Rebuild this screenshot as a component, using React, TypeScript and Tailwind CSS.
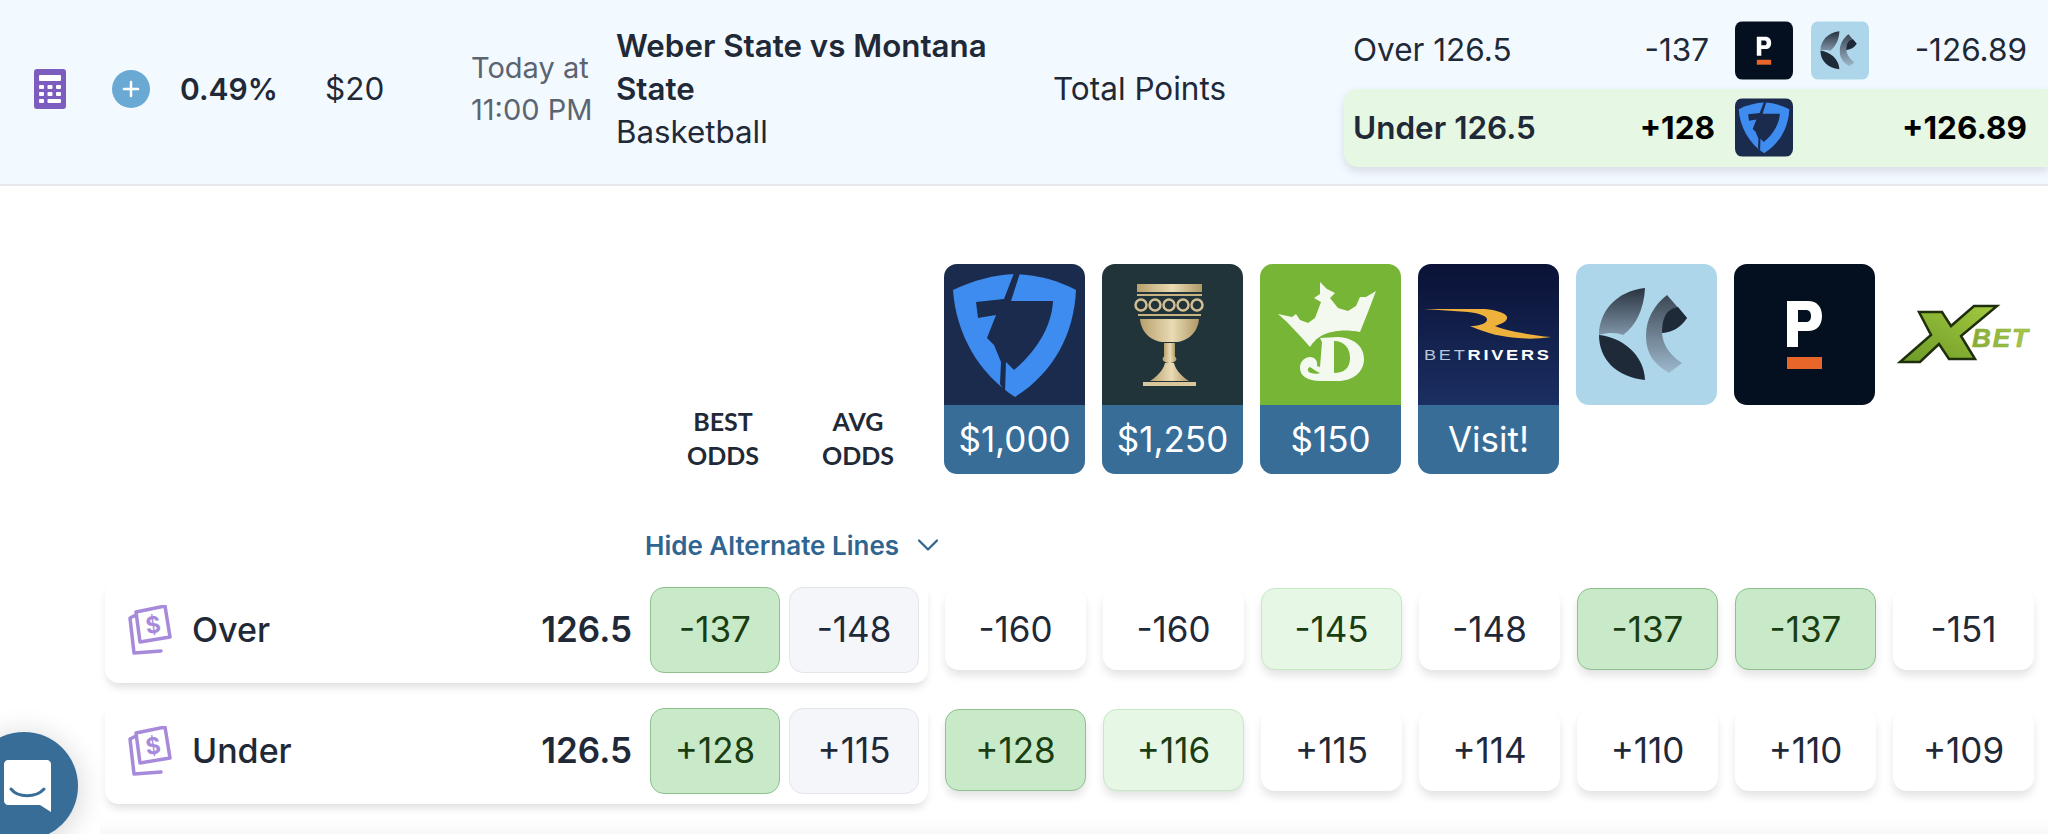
import { ChevronDown, Plus } from "lucide-react";

const FanDuelLogo = () => (
  <svg viewBox="0 0 141 141" className="w-full h-full block">
    <rect width="141" height="141" fill="#1a2b4d" />
    <path d="M9 26C30 16 50 11 71 10C95 11 115 17 132 26C130 70 110 108 71 133C35 110 12 70 9 26Z" fill="#3f8cf0" />
    <path d="M70 9L76 9L67 37L109 37C108 60 95 85 70 106L62 98L61 128L56 120L57 98L50 81L43 74L52 51L34 54L32 38L60 35Z" fill="#1a2b4d" />
  </svg>
);

const ChaliceLogo = () => (
  <svg viewBox="0 0 141 141" className="w-full h-full block">
    <defs>
      <linearGradient id="gold" x1="0" x2="1" y1="0" y2="0">
        <stop offset="0" stopColor="#b8a06c" />
        <stop offset="0.55" stopColor="#eadbb4" />
        <stop offset="1" stopColor="#b09866" />
      </linearGradient>
    </defs>
    <rect width="141" height="141" fill="#20343a" />
    <rect x="35" y="20" width="65" height="8" fill="url(#gold)" />
    <rect x="35" y="30" width="65" height="2" fill="#c9b383" />
    {[39, 53, 67, 81, 95].map((cx) => (
      <circle key={cx} cx={cx} cy="41" r="5.5" fill="none" stroke="#d3bf92" strokeWidth="2.5" />
    ))}
    <rect x="36" y="50" width="63" height="2" fill="#c9b383" />
    <path d="M38 55L97 55C96 68 86 77 75 78L60 78C49 77 39 68 38 55Z" fill="url(#gold)" />
    <rect x="62" y="79" width="11" height="14" fill="url(#gold)" />
    <ellipse cx="67.5" cy="95" rx="7" ry="4" fill="url(#gold)" />
    <path d="M63 99L72 99C74 107 81 113 87 117L48 117C54 113 61 107 63 99Z" fill="url(#gold)" />
    <rect x="41" y="118" width="53" height="4" fill="#d9c69a" />
  </svg>
);

const DraftKingsLogo = () => (
  <svg viewBox="0 0 141 141" className="w-full h-full block">
    <rect width="141" height="141" fill="#76b536" />
    <path d="M18 50L32 53L36 50L40 56L48 59L55 54L61 38L54 34L60 30L60 18L67 25L75 29L70 34L78 44L88 47L96 42L100 33L106 33L116 27L108 48L100 68C90 66 80 66 72 68C62 70 56 74 50 83C40 72 30 60 18 50Z" fill="#f4f9ef" />
    <path d="M60 74L78 73C95 74 104 83 104 95C104 108 93 117 78 117L60 117C48 117 40 112 40 104C40 97 45 93 50 93C55 93 58 97 57 102L60 103L62 78Z" fill="#f4f9ef" />
    <path d="M74 77C84 77 90 84 90 94C90 104 84 109 74 109Z" fill="#76b536" />
    <path d="M50 103C47 104 47 108 51 109C54 110 58 110 60 109L56 107Z" fill="#76b536" />
  </svg>
);

const BetRiversLogo = () => (
  <svg viewBox="0 0 141 141" className="w-full h-full block">
    <defs>
      <linearGradient id="rivers" x1="0" x2="0" y1="0" y2="1">
        <stop offset="0" stopColor="#0a1236" />
        <stop offset="1" stopColor="#1b2f62" />
      </linearGradient>
    </defs>
    <rect width="141" height="141" fill="url(#rivers)" />
    <path d="M6 45L67 45C78 46 88 49 89 53C90 57 84 60 77 62C86 66 110 71 133 73C120 75 108 75 100 74C85 73 70 70 52 62C60 62 68 60 69 56C70 52 60 49 50 48Z" fill="#eeb13c" />
    <text transform="translate(6 96) scale(1.3 1)" fontFamily="'Liberation Sans', sans-serif" fontSize="14" letterSpacing="2.1" fill="#b9c4d6">
      BET<tspan fontWeight="700" fill="#ffffff">RIVERS</tspan>
    </text>
  </svg>
);

const KalshiLogo = () => (
  <svg viewBox="0 0 141 141" className="w-full h-full block">
    <defs>
      <linearGradient id="leaf" x1="0" x2="0" y1="0" y2="1">
        <stop offset="0" stopColor="#2a3340" />
        <stop offset="1" stopColor="#7f95a8" />
      </linearGradient>
      <linearGradient id="arc" x1="0" x2="0" y1="0" y2="1">
        <stop offset="0" stopColor="#3d4855" />
        <stop offset="1" stopColor="#9db8cc" />
      </linearGradient>
    </defs>
    <rect width="141" height="141" fill="#aed6ea" />
    <path d="M69 24C40 27 23 48 23 71C33 68 42 69 47 71C60 62 68 45 69 24Z" fill="url(#leaf)" />
    <path d="M23 71C45 73 68 90 69 116C40 113 23 95 23 71Z" fill="#1f2a38" />
    <path d="M91 31L111 54C104 64 96 68 86 69C87 82 95 92 106 99L93 109C78 100 70 90 70 72C70 55 78 41 91 31Z" fill="url(#arc)" />
    <path d="M111 54L102 43C92 45 86 51 86 69C96 68 104 64 111 54Z" fill="#1f2a38" />
  </svg>
);

const PrizeLogo = () => (
  <svg viewBox="0 0 141 141" className="w-full h-full block">
    <rect width="141" height="141" fill="#04101f" />
    <path fillRule="evenodd" d="M53 37L74 37C83 37 88 43 88 52C88 61 83 67 74 67L64 67L64 83L53 83ZM64 46L64 58L72 58C75 58 77 56 77 52C77 48 75 46 72 46Z" fill="#ffffff" />
    <rect x="53" y="93" width="35" height="12" fill="#e8662a" />
  </svg>
);

const XBetLogo = () => (
  <svg viewBox="0 0 141 141" className="w-full h-full block">
    <defs>
      <linearGradient id="xgreen" x1="1" x2="0" y1="0" y2="1">
        <stop offset="0" stopColor="#a3c93f" />
        <stop offset="1" stopColor="#6c9a28" />
      </linearGradient>
      <linearGradient id="bgreen" x1="0" x2="1" y1="0" y2="0">
        <stop offset="0" stopColor="#86aa38" />
        <stop offset="1" stopColor="#a9cc49" />
      </linearGradient>
    </defs>
    <text x="80" y="83" fontFamily="'Liberation Sans', sans-serif" fontSize="26" fontWeight="700" fontStyle="italic" letterSpacing="2" fill="url(#bgreen)" stroke="#8fb23e" strokeWidth="0.7">BET</text>
    <path d="M27 48L50 48L59 62L82 42L105 42L69 72L83 95L57 95L47 80L28 98L8 98L39 71Z" fill="url(#xgreen)" stroke="#1f2f0c" strokeWidth="2.5" />
  </svg>
);

const MoneyIcon = () => (
  <svg viewBox="0 0 44 50" className="w-[44px] h-[50px] shrink-0">
    <path d="M8 10L2 13L6 48L33 46" fill="none" stroke="#a78bda" strokeWidth="3.5" strokeLinejoin="round" strokeLinecap="round" />
    <polygon points="8,7 37,1 42,32 12,37" fill="#fff" stroke="#a78bda" strokeWidth="3.5" strokeLinejoin="round" />
    <text x="25" y="28" textAnchor="middle" transform="rotate(-8 25 20)" fontFamily="Inter, sans-serif" fontWeight="700" fontSize="23" fill="#a78bda">$</text>
  </svg>
);

const CalcIcon = () => (
  <svg viewBox="0 0 32 40" className="w-[32px] h-[40px] shrink-0">
    <rect width="32" height="40" rx="3" fill="#7c5cbf" />
    <rect x="5" y="6" width="22" height="6" rx="1" fill="#fff" />
    {[16, 23].map((y) =>
      [5, 13.5, 22].map((x) => <rect key={`${x}-${y}`} x={x} y={y} width="5" height="4" rx="1" fill="#fff" />),
    )}
    <rect x="5" y="30" width="5" height="4" rx="1" fill="#fff" />
    <rect x="13.5" y="30" width="13.5" height="4" rx="1" fill="#fff" />
  </svg>
);

const ChatIcon = () => (
  <svg viewBox="0 0 47 52" className="w-[47px] h-[52px]">
    <path d="M4 0L43 0C45 0 47 2 47 4L47 52L36 45L4 45C2 45 0 43 0 41L0 4C0 2 2 0 4 0Z" fill="#fff" />
    <path d="M7 29C14 38 32 38 40 29" fill="none" stroke="#386d98" strokeWidth="3" strokeLinecap="round" />
  </svg>
);

const books = [
  { logo: <FanDuelLogo />, label: "$1,000" },
  { logo: <ChaliceLogo />, label: "$1,250" },
  { logo: <DraftKingsLogo />, label: "$150" },
  { logo: <BetRiversLogo />, label: "Visit!" },
  { logo: <KalshiLogo /> },
  { logo: <PrizeLogo /> },
  { logo: <XBetLogo /> },
];

type Odd = { v: string; tone?: "strong" | "light" };

const rows: { name: string; best: string; avg: string; odds: Odd[] }[] = [
  {
    name: "Over",
    best: "-137",
    avg: "-148",
    odds: [
      { v: "-160" },
      { v: "-160" },
      { v: "-145", tone: "light" },
      { v: "-148" },
      { v: "-137", tone: "strong" },
      { v: "-137", tone: "strong" },
      { v: "-151" },
    ],
  },
  {
    name: "Under",
    best: "+128",
    avg: "+115",
    odds: [
      { v: "+128", tone: "strong" },
      { v: "+116", tone: "light" },
      { v: "+115" },
      { v: "+114" },
      { v: "+110" },
      { v: "+110" },
      { v: "+109" },
    ],
  },
];

const oddClass = (tone?: string) => {
  if (tone === "strong") return "bg-[#c9eac9] border border-[#8fc08f] text-[#1a3d12]";
  if (tone === "light") return "bg-[#e6f7e6] border border-[#c5e8c5] text-[#1a3d12]";
  return "bg-white text-[#1f2937]";
};

export default function App() {
  return (
    <div className="relative h-[834px] overflow-hidden bg-white text-[#1f2937] font-['Inter',sans-serif]">
      {/* top bet row */}
      <div className="flex items-center h-[186px] pb-[6px] bg-[#f3faff] border-b-2 border-[#e5e7eb]">
        <div className="flex items-center w-[616px] pl-[34px]">
          <CalcIcon />
          <div className="ml-[46px] w-[38px] h-[38px] rounded-full bg-[#6aa9d4] flex items-center justify-center text-white shrink-0">
            <Plus size={24} strokeWidth={2.5} />
          </div>
          <div className="ml-[30px] w-[145px] text-[30px] font-semibold">0.49%</div>
          <div className="w-[146px] text-[31.5px]">$20</div>
          <div className="text-[29px] leading-[42px] text-[#5b6470] whitespace-nowrap">
            Today at
            <br />
            11:00 PM
          </div>
        </div>
        <div className="w-[437px] pr-[50px] text-[31.3px] leading-[43px]">
          <div className="font-semibold">Weber State vs Montana State</div>
          <div>Basketball</div>
        </div>
        <div className="w-[291px] text-[31.5px]">Total Points</div>
        <div className="flex-1 flex flex-col">
          <div className="flex items-center h-[59px] pl-[9px] pr-[21px] my-[9px] text-[31.5px]">
            <div className="w-[282px]">Over 126.5</div>
            <div className="w-[74px] text-right">-137</div>
            <div className="ml-[26px] w-[58px] h-[59px] rounded-[8px] overflow-hidden">
              <PrizeLogo />
            </div>
            <div className="ml-[18px] w-[58px] h-[59px] rounded-[8px] overflow-hidden">
              <KalshiLogo />
            </div>
            <div className="flex-1 text-right">-126.89</div>
          </div>
          <div className="flex items-center h-[78px] pl-[9px] pr-[21px] rounded-l-[14px] bg-[#e6f7e3] shadow-[0_4px_10px_rgba(0,0,0,0.12)] text-[31.5px] font-bold">
            <div className="w-[282px] font-semibold">Under 126.5</div>
            <div className="w-[80px] text-right text-black">+128</div>
            <div className="ml-[20px] w-[58px] h-[59px] rounded-[8px] overflow-hidden">
              <FanDuelLogo />
            </div>
            <div className="flex-1 text-right text-black">+126.89</div>
          </div>
        </div>
      </div>

      <div className="pt-[78px]">
        {/* sportsbook logos */}
        <div className="flex items-end">
          <div className="w-[944px] pl-[658px] flex gap-[5px] pb-[2px] shrink-0">
            <div className="w-[130px] text-center text-[25px] leading-[34px] font-bold font-['Lato',sans-serif]">
              BEST
              <br />
              ODDS
            </div>
            <div className="w-[130px] text-center text-[25px] leading-[34px] font-bold font-['Lato',sans-serif]">
              AVG
              <br />
              ODDS
            </div>
          </div>
          <div className="flex items-start gap-[17px]">
            {books.map((b, i) => (
              <div key={i} className="w-[141px] rounded-[13px] overflow-hidden">
                <div className="h-[141px]">{b.logo}</div>
                {b.label && (
                  <div className="h-[69px] bg-[#386d98] text-white text-[35px] flex items-center justify-center">
                    {b.label}
                  </div>
                )}
              </div>
            ))}
          </div>
        </div>

        <div className="flex items-center h-[30px] mt-[56px] pl-[645px] text-[26px] font-semibold text-[#2f6590]">
          <span className="whitespace-nowrap">Hide Alternate Lines</span>
          <ChevronDown size={36} strokeWidth={1.5} className="ml-[11px]" />
        </div>

        {/* odds rows */}
        <div className="mt-[20px] flex flex-col gap-[18px]">
          {rows.map((r) => (
            <div key={r.name} className="flex items-start pl-[105px]">
              <div className="flex items-center w-[823px] h-[103px] pl-[23px] pr-[9px] pb-[4px] rounded-[14px] bg-white shadow-[0_6px_8px_-2px_rgba(0,0,0,0.13)] shrink-0">
                <MoneyIcon />
                <div className="ml-[20px] flex-1 text-[34px] font-medium">{r.name}</div>
                <div className="mr-[18px] text-[35px] font-semibold">126.5</div>
                <div className={"w-[130px] h-[86px] rounded-[14px] flex items-center justify-center text-[35px] " + oddClass("strong")}>
                  {r.best}
                </div>
                <div className="ml-[9px] w-[130px] h-[86px] rounded-[14px] bg-[#f4f6fa] border border-[#e2e5ea] flex items-center justify-center text-[35px]">
                  {r.avg}
                </div>
              </div>
              <div className="ml-[17px] mt-[8px] flex gap-[17px]">
                {r.odds.map((o, i) => (
                  <div
                    key={i}
                    className={
                      "w-[141px] h-[82px] rounded-[14px] flex items-center justify-center text-[35px] shadow-[0_6px_10px_-1px_rgba(0,0,0,0.12)] " +
                      oddClass(o.tone)
                    }
                  >
                    {o.v}
                  </div>
                ))}
              </div>
            </div>
          ))}
        </div>
      </div>

      {/* chat launcher */}
      <div className="absolute left-[-30px] top-[732px] w-[108px] h-[108px] rounded-full bg-[#386d98] shadow-[0_4px_30px_rgba(0,0,0,0.18)] flex items-center justify-center pl-[6px]">
        <ChatIcon />
      </div>
      <div className="absolute left-[100px] right-0 bottom-0 h-[14px] bg-gradient-to-b from-white to-[#f8f8f8]" />
    </div>
  );
}
